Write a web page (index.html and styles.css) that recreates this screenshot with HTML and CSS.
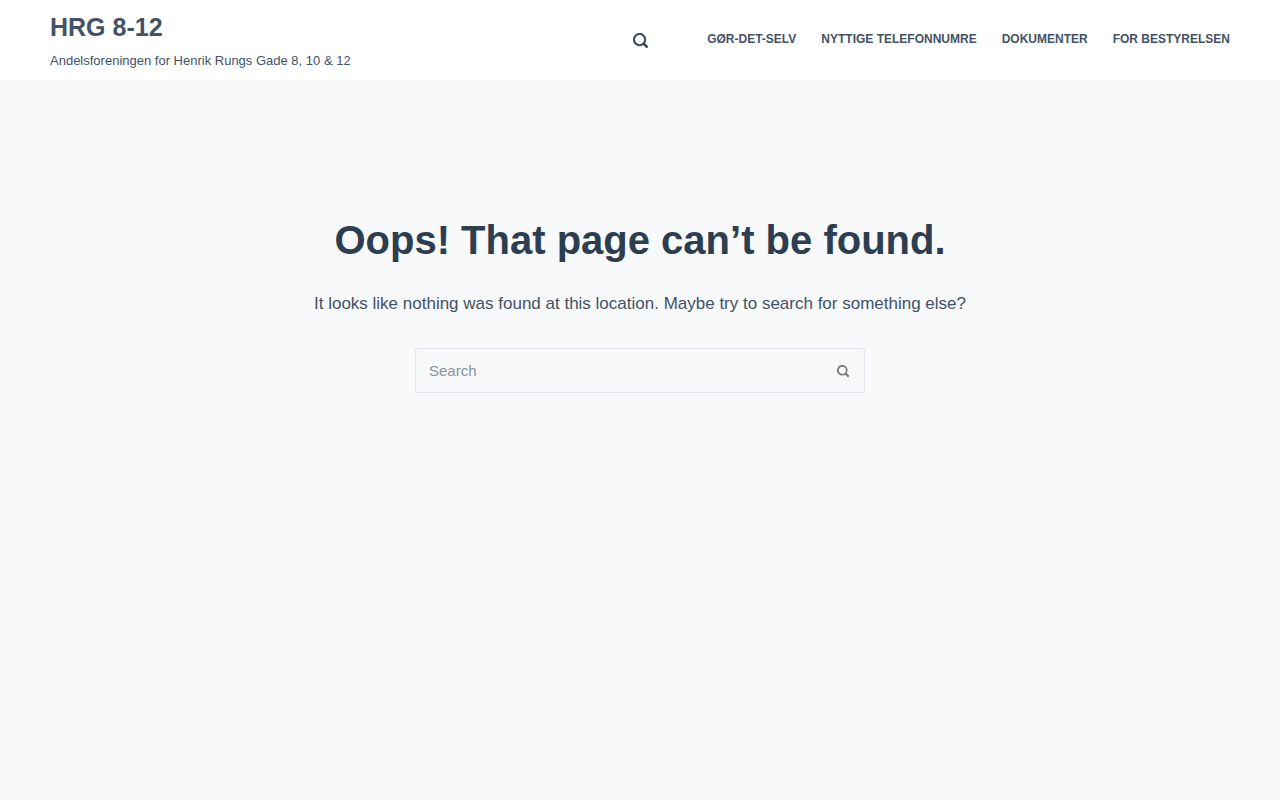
FILE: index.html
```html
<!DOCTYPE html>
<html lang="da">
<head>
    <meta charset="UTF-8">
    <meta name="viewport" content="width=device-width, initial-scale=1.0">
    <title>HRG 8-12</title>
    <link rel="stylesheet" href="styles.css">
</head>
<body>
    <header class="site-header">
        <div class="site-branding">
            <a class="site-title" href="#">HRG 8-12</a>
            <p class="site-description">Andelsforeningen for Henrik Rungs Gade 8, 10 &amp; 12</p>
        </div>
        <button class="header-search" type="button" aria-label="Search">
            <svg class="icon" viewBox="0 0 15 15" aria-hidden="true">
                <circle cx="6.6" cy="6.6" r="5.6" stroke-width="2.1"/>
                <path d="M11 11L13.7 13.7" stroke-width="2.6" stroke-linecap="round"/>
            </svg>
        </button>
        <nav class="main-menu">
            <a href="#">Gør-det-selv</a>
            <a href="#">Nyttige telefonnumre</a>
            <a href="#">Dokumenter</a>
            <a href="#">For bestyrelsen</a>
        </nav>
    </header>

    <main class="not-found">
        <h1>Oops! That page can’t be found.</h1>
        <p>It looks like nothing was found at this location. Maybe try to search for something else?</p>
        <form class="search-form" role="search">
            <input type="search" placeholder="Search" aria-label="Search">
            <button type="submit" aria-label="Search">
                <svg class="icon" viewBox="0 0 15 15" aria-hidden="true">
                    <circle cx="6.6" cy="6.6" r="5.6" stroke-width="2.1"/>
                    <path d="M11 11L13.7 13.7" stroke-width="2.6" stroke-linecap="round"/>
                </svg>
            </button>
        </form>
    </main>
</body>
</html>
```

FILE: styles.css
```css
* {
    box-sizing: border-box;
}
body {
    margin: 0;
    background: #f8f9fb;
    color: #435266;
    font-family: "Liberation Sans", Arial, sans-serif;
    font-size: 17px;
}
h1, p {
    margin: 0;
}
a {
    color: inherit;
    text-decoration: none;
}
button {
    display: flex;
    align-items: center;
    justify-content: center;
    padding: 0;
    border: none;
    background: none;
    color: inherit;
    cursor: pointer;
}
.icon {
    display: block;
    width: 15px;
    height: 15px;
    fill: none;
    stroke: currentColor;
}

/* Header */
.site-header {
    display: flex;
    align-items: center;
    min-height: 80px;
    padding: 0 50px;
    background: #fff;
}
.site-branding {
    display: flex;
    flex-direction: column;
    gap: 8px;
    margin-right: auto;
    padding-top: 2px;
}
.site-title {
    font-size: 25px;
    font-weight: bold;
    line-height: 32px;
}
.site-description {
    font-size: 13px;
    line-height: 20px;
}
.header-search {
    margin-right: 59px;
    color: #3a4b5c;
}
.main-menu {
    display: flex;
    gap: 25px;
    padding-bottom: 2px;
    font-size: 12px;
    font-weight: bold;
    line-height: 16px;
    text-transform: uppercase;
}

/* 404 */
.not-found {
    display: flex;
    flex-direction: column;
    align-items: center;
    padding: 130px 50px;
    text-align: center;
}
.not-found h1 {
    margin-bottom: 20px;
    color: #2c3e50;
    font-size: 40px;
    line-height: 60px;
}
.not-found p {
    margin-bottom: 30px;
    line-height: 28px;
}
.search-form {
    display: flex;
    width: 100%;
    max-width: 450px;
    height: 45px;
    border: 1px solid #e0e5eb;
    border-radius: 3px;
}
.search-form input {
    flex: 1;
    min-width: 0;
    padding: 0 13px;
    border: none;
    outline: none;
    background: none;
    color: inherit;
    font-family: inherit;
    font-size: 15px;
}
.search-form input::placeholder {
    color: #8494a3;
}
.search-form button {
    width: 43px;
    color: #757575;
}
.search-form .icon {
    width: 12px;
    height: 12px;
}
```
